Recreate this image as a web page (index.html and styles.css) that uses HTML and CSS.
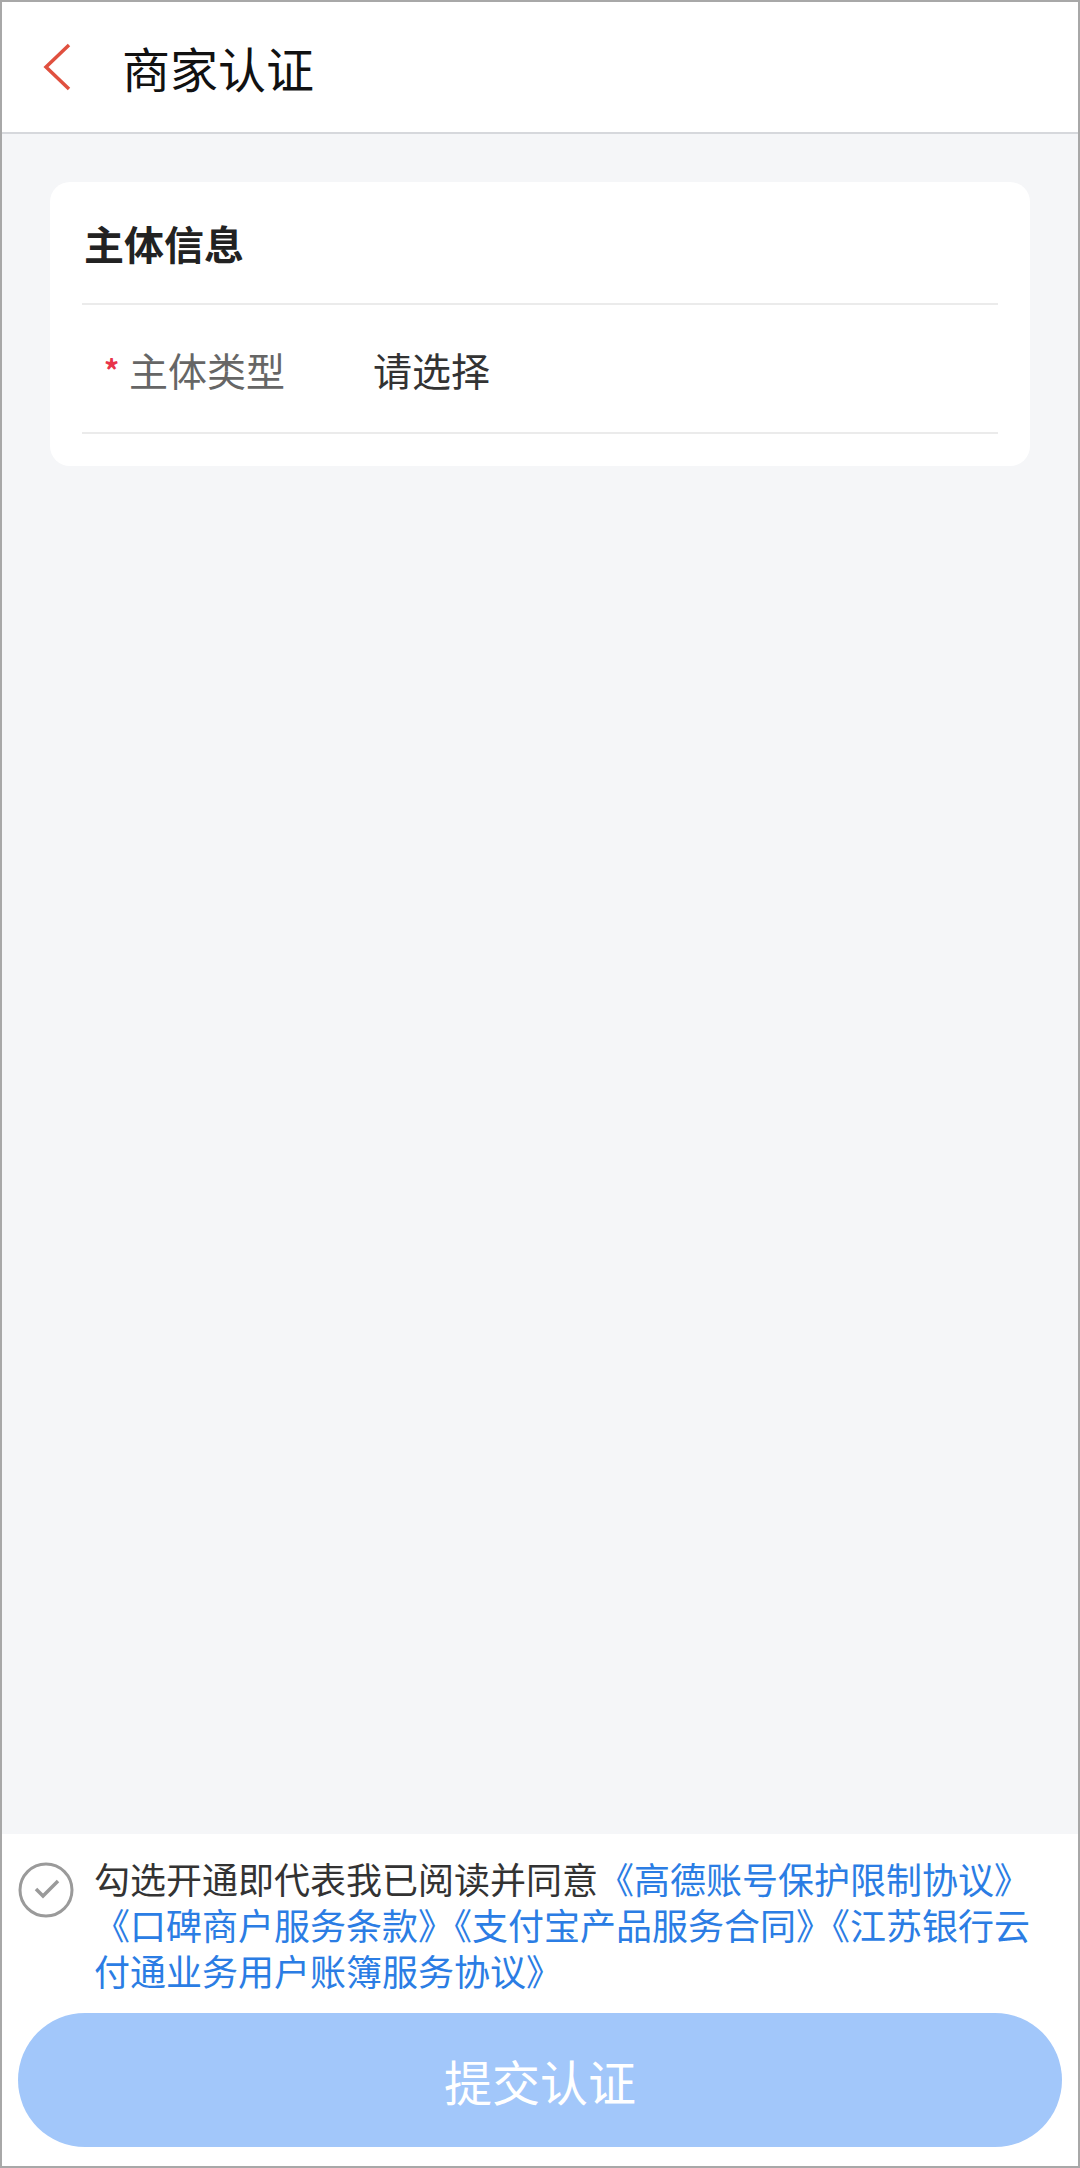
FILE: index.html
```html
<!DOCTYPE html>
<html>
  <head>
    <meta charset="utf-8">
    <title>商家认证</title>
    <link rel="stylesheet" href="styles.css">
  </head>
  <body>
    <div class="page">
      <div class="header">
        <a href="javascript:;" class="back">
          <svg width="30" height="50" viewBox="0 0 30 50"><polyline points="27,3 4,25 27,47" fill="none" stroke="#e0503f" stroke-width="3.5"/></svg>
        </a>
        <h1 class="title">商家认证</h1>
      </div>
      <div class="main">
        <div class="card">
          <div class="card-title">主体信息</div>
          <div class="form-row">
            <span class="label"><i class="star">*</i>主体类型</span>
            <span class="value">请选择</span>
          </div>
        </div>
      </div>
      <div class="footer">
        <div class="agree">
          <span class="check">
            <svg width="56" height="56" viewBox="0 0 56 56"><circle cx="28" cy="28" r="26" fill="none" stroke="#9a9a9a" stroke-width="3"/><polyline points="18,27 25,34 40,19" fill="none" stroke="#9a9a9a" stroke-width="3.5"/></svg>
          </span>
          <p class="agree-text">勾选开通即代表我已阅读并同意<a href="javascript:;">《高德账号保护限制协议》</a><a href="javascript:;">《口碑商户服务条款》</a><a href="javascript:;">《支付宝产品服务合同》</a><a href="javascript:;">《江苏银行云付通业务用户账簿服务协议》</a></p>
        </div>
        <a href="javascript:;" class="submit">提交认证</a>
      </div>
    </div>
  </body>
</html>
```
FILE: styles.css
```css
*{ margin:0; padding:0; box-sizing:border-box; }
a{ text-decoration:none; }
body{ font-family:"Noto Sans CJK SC","Noto Sans",sans-serif; background:#fff; }
.page{ width:1080px; height:2168px; border:2px solid #a8a8a8; display:flex; flex-direction:column; background:#f5f6f8; }

.header{ height:132px; background:#fff; border-bottom:2px solid #d6d8dc; display:flex; align-items:center; }
.back{ width:30px; height:50px; margin-left:40px; margin-right:50px; display:block; }
.back svg{ display:block; }
.title{ font-size:48px; font-weight:normal; color:#111; line-height:1; }

.main{ flex:1; padding:48px 48px 0 48px; }
.card{ background:#fff; border-radius:20px; padding:0 32px 32px 32px; }
.card-title{ height:123px; display:flex; align-items:center; font-size:40px; font-weight:bold; color:#222; padding-left:2px; border-bottom:2px solid #ebebeb; }
.form-row{ height:129px; display:flex; align-items:center; border-bottom:2px solid #ebebeb; }
.label{ width:291px; font-size:39px; color:#666; position:relative; padding-left:47px; }
.star{ position:absolute; left:22px; top:6px; font-style:normal; font-weight:bold; font-size:30px; color:#e8334a; }
.value{ font-size:39px; color:#333; }

.footer{ background:#fff; padding:21px 16px 19px 16px; }
.agree{ display:flex; align-items:flex-start; }
.check{ width:56px; height:56px; margin-top:7px; margin-right:20px; flex-shrink:0; }
.check svg{ display:block; }
.agree-text{ width:966px; font-size:36px; line-height:46px; color:#333; }
.agree-text a{ color:#2b7de4; }
.submit{ display:block; margin-top:20px; height:134px; border-radius:67px; background:#a2c7fa; color:#fff; font-size:48px; line-height:134px; text-align:center; }
```
